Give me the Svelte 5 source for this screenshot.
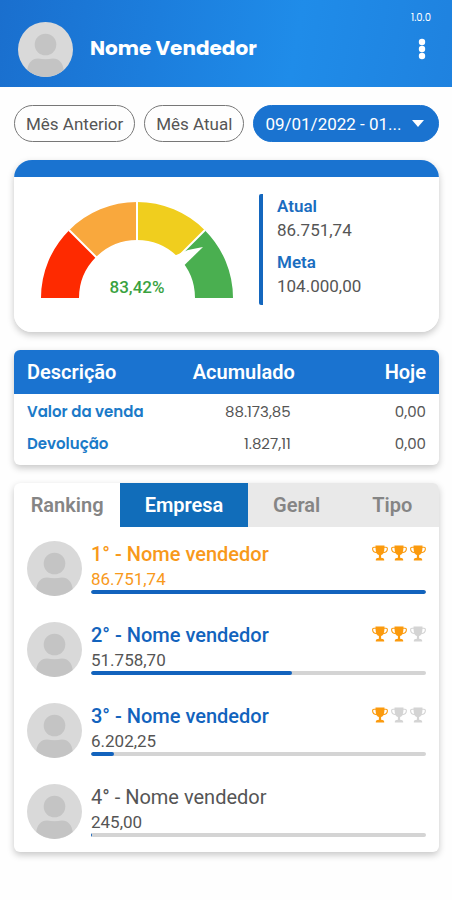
<script>
  let period = $state('range')
  let tab = $state('Empresa')

  const tabs = ['Empresa', 'Geral', 'Tipo']

  const gauge = [
    { color: '#fe2a00', d: 'M19 96A77 77 0 0 1 41.6 41.6' },
    { color: '#f9a83d', d: 'M41.6 41.6A77 77 0 0 1 96 19' },
    { color: '#f0ce1e', d: 'M96 19A77 77 0 0 1 150.4 41.6' },
    { color: '#4aaf50', d: 'M150.4 41.6A77 77 0 0 1 173 96' },
  ]

  const totals = [
    { label: 'Valor da venda', total: '88.173,85', today: '0,00' },
    { label: 'Devolução', total: '1.827,11', today: '0,00' },
  ]

  const sellers = [
    { name: 'Nome vendedor', value: '86.751,74', percent: 100, cups: 3 },
    { name: 'Nome vendedor', value: '51.758,70', percent: 60, cups: 2 },
    { name: 'Nome vendedor', value: '6.202,25', percent: 7, cups: 1 },
    { name: 'Nome vendedor', value: '245,00', percent: 0.3, cups: 0 },
  ]
</script>

{#snippet avatar()}
  <svg class="avatar" viewBox="0 0 55 55" aria-hidden="true">
    <circle cx="27.5" cy="27.5" r="27.5" fill="#d9d9d9" />
    <circle cx="27.5" cy="22.5" r="10.8" fill="#c4c4c4" />
    <path d="M9.3 48C10 41 14 36.5 20 36.5c5 1 10 1 15 0 6 0 10 4.5 10.7 11.5A27.5 27.5 0 0 1 9.3 48z" fill="#c4c4c4" />
  </svg>
{/snippet}

{#snippet trophy(on)}
  <svg class="trophy" class:on viewBox="0 0 16 16" aria-hidden="true">
    <path d="M4 2.3H2C1 2.300.6 2.800.6 3.800c0 2 1.600 3.700 4.400 4M12 2.300h2c1 0 1.400.5 1.400 1.500 0 2-1.600 3.700-4.400 4" fill="none" stroke="currentColor" stroke-width="1.100" />
    <path d="M3.500.5h9c0 3.500-.2 6-1.200 7.800-.5.900-1.300 1.500-2.200 1.800v2.700c1.900.1 3.100.8 3.100 1.900v.8H3.800v-.8c0-1.100 1.200-1.800 3.100-1.900v-2.700c-.9-.3-1.700-.9-2.200-1.800C3.700 6.500 3.500 4 3.500.5z" fill="currentColor" />
  </svg>
{/snippet}

<header>
  {@render avatar()}
  <h1>Nome Vendedor</h1>
  <div class="corner">
    <span class="version">1.0.0</span>
    <button class="menu" aria-label="Menu">
      <svg viewBox="0 0 8 22" width="8" height="22">
        <circle cx="4" cy="4" r="3.2" />
        <circle cx="4" cy="11" r="3.2" />
        <circle cx="4" cy="18" r="3.2" />
      </svg>
    </button>
  </div>
</header>

<main>
  <div class="periods">
    <button class:active={period === 'previous'} onclick={() => period = 'previous'}>Mês Anterior</button>
    <button class:active={period === 'current'} onclick={() => period = 'current'}>Mês Atual</button>
    <button class="range" class:active={period === 'range'} onclick={() => period = 'range'}>
      <span>09/01/2022 - 01...</span>
      <svg viewBox="0 0 12 7" width="12" height="7"><path d="M0 0h12L6 7z" fill="currentColor" /></svg>
    </button>
  </div>

  <section class="card goal">
    <div class="gauge">
      <svg viewBox="0 0 192 96" aria-hidden="true">
        {#each gauge as part}
          <path d={part.d} fill="none" stroke={part.color} stroke-width="38" />
        {/each}
        <path d="M96 0v40M28 28l29 29M164 28l-29 29" stroke="#fff" stroke-width="2" />
        <path d="M134 53.5L147 48 162 45 143 63.5 136 62z" fill="#fff" />
      </svg>
      <span class="percent">83,42%</span>
    </div>
    <dl>
      <dt>Atual</dt>
      <dd>86.751,74</dd>
      <dt>Meta</dt>
      <dd>104.000,00</dd>
    </dl>
  </section>

  <section class="card">
    <table>
      <thead>
        <tr><th>Descrição</th><th>Acumulado</th><th>Hoje</th></tr>
      </thead>
      <tbody>
        {#each totals as row}
          <tr>
            <th scope="row">{row.label}</th>
            <td>{row.total}</td>
            <td>{row.today}</td>
          </tr>
        {/each}
      </tbody>
    </table>
  </section>

  <section class="card ranking">
    <div class="tabs">
      <h2>Ranking</h2>
      {#each tabs as name}
        <button class:active={tab === name} onclick={() => tab = name}>{name}</button>
      {/each}
    </div>
    <ol>
      {#each sellers as seller, i}
        <li class:first={i === 0} class:podium={seller.cups > 0}>
          {@render avatar()}
          <div class="info">
            <div class="title">
              <span class="name">{i + 1}° - {seller.name}</span>
              {#if seller.cups}
                <span class="cups">
                  {#each [0, 1, 2] as n}
                    {@render trophy(n < seller.cups)}
                  {/each}
                </span>
              {/if}
            </div>
            <span class="value">{seller.value}</span>
            <div class="bar"><div class="fill" style="width: {seller.percent}%"></div></div>
          </div>
        </li>
      {/each}
    </ol>
  </section>
</main>

<style>
  :global(body) {
    margin: 0;
    background: #fefefe;
    color: #555;
    font-family: Roboto, "Liberation Sans", sans-serif;
  }

  button {
    border: 0;
    padding: 0;
    background: none;
    font: inherit;
    color: inherit;
    cursor: pointer;
  }

  header {
    display: flex;
    align-items: flex-end;
    box-sizing: border-box;
    height: 87px;
    padding: 0 21px 10px 18px;
    background: linear-gradient(100deg, #1a6fce 0%, #1c7edd 35%, #1f8ce9 65%, #1f82df 100%);
    color: #fff;
  }

  .avatar {
    flex: none;
    width: 55px;
    height: 55px;
  }

  h1 {
    flex: 1;
    margin: 0 0 0 17px;
    font: 700 20px/58px Poppins, Inter, sans-serif;
  }

  .corner {
    display: flex;
    flex-direction: column;
    align-items: flex-end;
    gap: 14px;
    padding-bottom: 17px;
  }

  .version {
    font: 400 10px/12px Poppins, Inter, sans-serif;
  }

  .menu {
    display: flex;
    margin-right: 5px;
    fill: #fff;
  }

  main {
    display: flex;
    flex-direction: column;
    gap: 18px;
    padding: 18px 13px 46px 14px;
  }

  .periods {
    display: flex;
    gap: 9px;
    height: 37px;
  }

  .periods button {
    border: 1px solid #777;
    border-radius: 19px;
    padding: 0 11px;
    font-size: 17px;
    white-space: nowrap;
  }

  .periods .range {
    display: flex;
    flex: 1;
    align-items: center;
    justify-content: space-between;
    padding-right: 14px;
  }

  .periods .active {
    border-color: #1a73d0;
    background: #1a73d0;
    color: #fff;
  }

  .card {
    border-radius: 6px;
    background: #fff;
    box-shadow: 0 3px 7px rgba(0, 0, 0, 0.22);
    overflow: hidden;
  }

  .goal {
    display: flex;
    align-items: flex-start;
    justify-content: space-between;
    border-radius: 18px;
    padding: 34px 27px 27px;
    background: linear-gradient(#1a73d0 17px, #fff 17px);
  }

  .gauge {
    position: relative;
    flex: 0 1 192px;
    padding-top: 8px;
  }

  .gauge svg {
    display: block;
    width: 100%;
  }

  .percent {
    position: absolute;
    bottom: 0;
    width: 100%;
    color: #3aa23f;
    font-size: 17px;
    font-weight: 500;
    line-height: 22px;
    text-align: center;
  }

  dl {
    flex: 0 1 135px;
    margin: 0;
    border-left: 4px solid #1467be;
    border-radius: 2px;
    padding-left: 14px;
    font-size: 17px;
    line-height: 24px;
  }

  dt {
    color: #1a6dc0;
    font-weight: 600;
  }

  dd {
    margin: 0;
  }

  dd + dt {
    margin-top: 8px;
  }

  dd:last-child {
    padding-bottom: 7px;
  }

  table {
    width: 100%;
    border-collapse: collapse;
    table-layout: fixed;
    text-align: right;
  }

  th,
  td {
    padding: 0;
  }

  th:first-child {
    width: 36%;
    padding-left: 13px;
    text-align: left;
  }

  th:last-child,
  td:last-child {
    padding-right: 13px;
  }

  thead th {
    height: 44px;
    background: #1a73d0;
    color: #fff;
    font-size: 20px;
    font-weight: 600;
  }

  thead th:nth-child(2) {
    width: 27%;
  }

  tbody {
    font: 400 15px/32px Poppins, Inter, sans-serif;
  }

  tbody tr:first-child > * {
    padding-top: 2px;
  }

  tbody tr:last-child > * {
    padding-bottom: 5px;
  }

  tbody th {
    color: #1b7ac8;
    font-weight: 600;
  }

  tbody td:nth-child(2) {
    padding-right: 4px;
  }

  .tabs {
    display: grid;
    grid-template-columns: 25fr 30fr 23fr 22fr;
    height: 44px;
    background: #e9e9e9;
    color: #858585;
    font-size: 20px;
    font-weight: 600;
    line-height: 44px;
    text-align: center;
  }

  h2 {
    margin: 0;
    background: #fff;
    font: inherit;
  }

  .tabs .active {
    background: #116dba;
    color: #fff;
  }

  ol {
    display: flex;
    flex-direction: column;
    gap: 26px;
    margin: 0;
    padding: 14px 13px 13px;
    list-style: none;
  }

  li {
    display: flex;
    gap: 9px;
  }

  .info {
    flex: 1;
  }

  .title {
    display: flex;
    justify-content: space-between;
    font-size: 20px;
    line-height: 27px;
  }

  .podium .name {
    color: #1263bd;
    font-weight: 500;
  }

  .cups {
    display: flex;
    gap: 3px;
    padding-top: 4px;
  }

  .trophy {
    width: 16px;
    height: 16px;
    color: #d4d4d4;
  }

  .trophy.on {
    color: #fb9a0d;
  }

  .value {
    display: block;
    font-size: 17px;
    line-height: 22px;
  }

  .podium.first .name,
  .first .value {
    color: #f8991b;
  }

  .bar {
    height: 4px;
    border-radius: 2px;
    background: #d4d4d4;
    overflow: hidden;
  }

  .fill {
    height: 100%;
    border-radius: 2px;
    background: #1263bd;
  }
</style>
